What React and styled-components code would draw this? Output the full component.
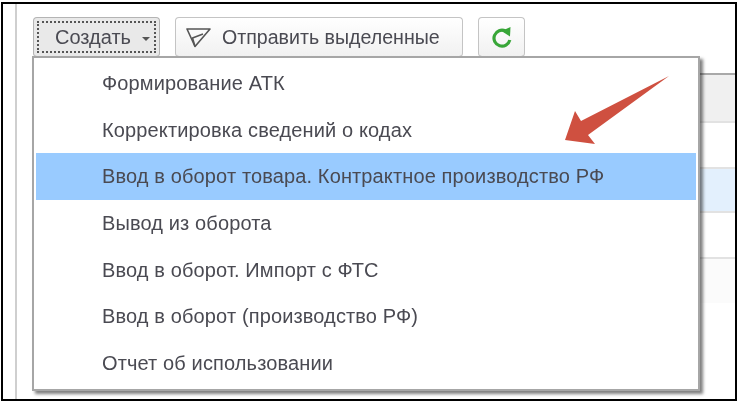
import React from 'react';
import styled, { createGlobalStyle } from 'styled-components';

const GlobalStyle = createGlobalStyle`
  html, body {
    margin: 0;
    padding: 0;
    background: #fff;
  }
  body {
    font-family: "Liberation Sans", Arial, sans-serif;
    color: #4a4a52;
  }
`;

const Frame = styled.div`
  box-sizing: border-box;
  width: 736px;
  height: 399px;
  margin: 2px 0 0 1px;
  border: 2px solid #000;
  overflow: hidden;
  background: #fff;
  filter: blur(0.4px);
`;

const Workspace = styled.div`
  position: relative;
  height: 100%;
  margin-left: 12px;
  border-left: 2px solid #cfcfcf;
  padding: 13px 0 0 16px;
`;

const Toolbar = styled.div`
  display: flex;
  gap: 15px;
  height: 40px;
`;

const ToolButton = styled.div`
  box-sizing: border-box;
  display: flex;
  align-items: center;
  justify-content: ${props => (props.$center ? 'center' : 'flex-start')};
  width: ${props => props.$width}px;
  padding: ${props => props.$pad || 0};
  border: 1px solid ${props => (props.$pressed ? '#b4b4b4' : '#c4c4c4')};
  border-bottom-color: #a9a9a9;
  border-radius: 4px;
  background: ${props => (props.$pressed ? '#e9e9e9' : 'linear-gradient(#ffffff, #f1f1f1)')};
  white-space: nowrap;
`;

const FocusRing = styled.div`
  display: flex;
  align-items: center;
  flex: 1;
  height: 100%;
  box-sizing: border-box;
  padding-left: 16px;
  border: 2px dotted #555;
  font-size: 20px;
`;

const Caret = styled.span`
  width: 0;
  height: 0;
  margin-left: 11px;
  margin-top: 3px;
  border-left: 4px solid transparent;
  border-right: 4px solid transparent;
  border-top: 4px solid #555;
`;

const SendLabel = styled.span`
  margin-left: 11px;
  font-size: 19.6px;
`;

const Table = styled.div`
  margin-top: 16px;
  margin-left: -1px;
`;

const TableRow = styled.div`
  box-sizing: border-box;
  height: ${props => props.$height}px;
  background: ${props => props.$bg || '#fff'};
  border-top: ${props => (props.$strong ? '2px solid #a9a9a9' : '2px solid #e2e2e2')};
`;

const Menu = styled.div`
  position: absolute;
  left: 15px;
  top: 52px;
  box-sizing: border-box;
  width: 668px;
  height: 335px;
  padding: 2px;
  background: #fff;
  border: 2px solid #a6a6a6;
  box-shadow: 3px 3px 3px rgba(0, 0, 0, 0.5);
`;

const MenuItem = styled.div`
  display: flex;
  align-items: center;
  height: 46.7px;
  padding: 0 0 0 66px;
  box-sizing: border-box;
  font-size: 20px;
  letter-spacing: 0.13px;
  white-space: nowrap;
  background: ${props => (props.$active ? '#99cbff' : 'transparent')};
`;

const ArrowMark = styled.svg`
  position: absolute;
  left: 528px;
  top: 65px;
`;

const items = [
  'Формирование АТК',
  'Корректировка сведений о кодах',
  'Ввод в оборот товара. Контрактное производство РФ',
  'Вывод из оборота',
  'Ввод в оборот. Импорт с ФТС',
  'Ввод в оборот (производство РФ)',
  'Отчет об использовании',
];

const rows = [
  { height: 48, bg: '#f0f0f0', strong: true },
  { height: 46 },
  { height: 44, bg: '#e3f0fd' },
  { height: 46 },
  { height: 46, bg: '#fbfbfb' },
];

export default function App() {
  return (
    <>
      <GlobalStyle />
      <Frame>
        <Workspace>
          <Toolbar>
            <ToolButton $width={127} $pad="3px" $pressed>
              <FocusRing>
                Создать
                <Caret />
              </FocusRing>
            </ToolButton>
            <ToolButton $width={288} $pad="0 0 0 10px">
              <svg width="25" height="21" viewBox="0 0 25 21" fill="none" stroke="#555" strokeWidth="1.6" strokeLinejoin="round">
                <path d="M1 2 L24 2 L9 19.5 Z" />
                <path d="M9 19.5 L6.5 11 L17 7" />
              </svg>
              <SendLabel>Отправить выделенные</SendLabel>
            </ToolButton>
            <ToolButton $width={47} $center>
              <svg width="22" height="22" viewBox="0 0 22 22" fill="none">
                <path d="M14.5 5 A8 8 0 1 0 18.8 14" stroke="#38a638" strokeWidth="3.2" />
                <path d="M10.5 5 L19.5 1 L19 10.5 Z" fill="#38a638" />
              </svg>
            </ToolButton>
          </Toolbar>
          <Table>
            {rows.map((row, i) => (
              <TableRow key={i} $height={row.height} $bg={row.bg} $strong={row.strong} />
            ))}
          </Table>
          <Menu>
            {items.map((item, i) => (
              <MenuItem key={item} $active={i === 2}>{item}</MenuItem>
            ))}
          </Menu>
          <ArrowMark width="130" height="80" viewBox="0 0 130 80">
            <path d="M124 7 L36 52 L30 42 L20 71 L50 75 L43 66 Z" fill="#cf5040" />
          </ArrowMark>
        </Workspace>
      </Frame>
    </>
  );
}
